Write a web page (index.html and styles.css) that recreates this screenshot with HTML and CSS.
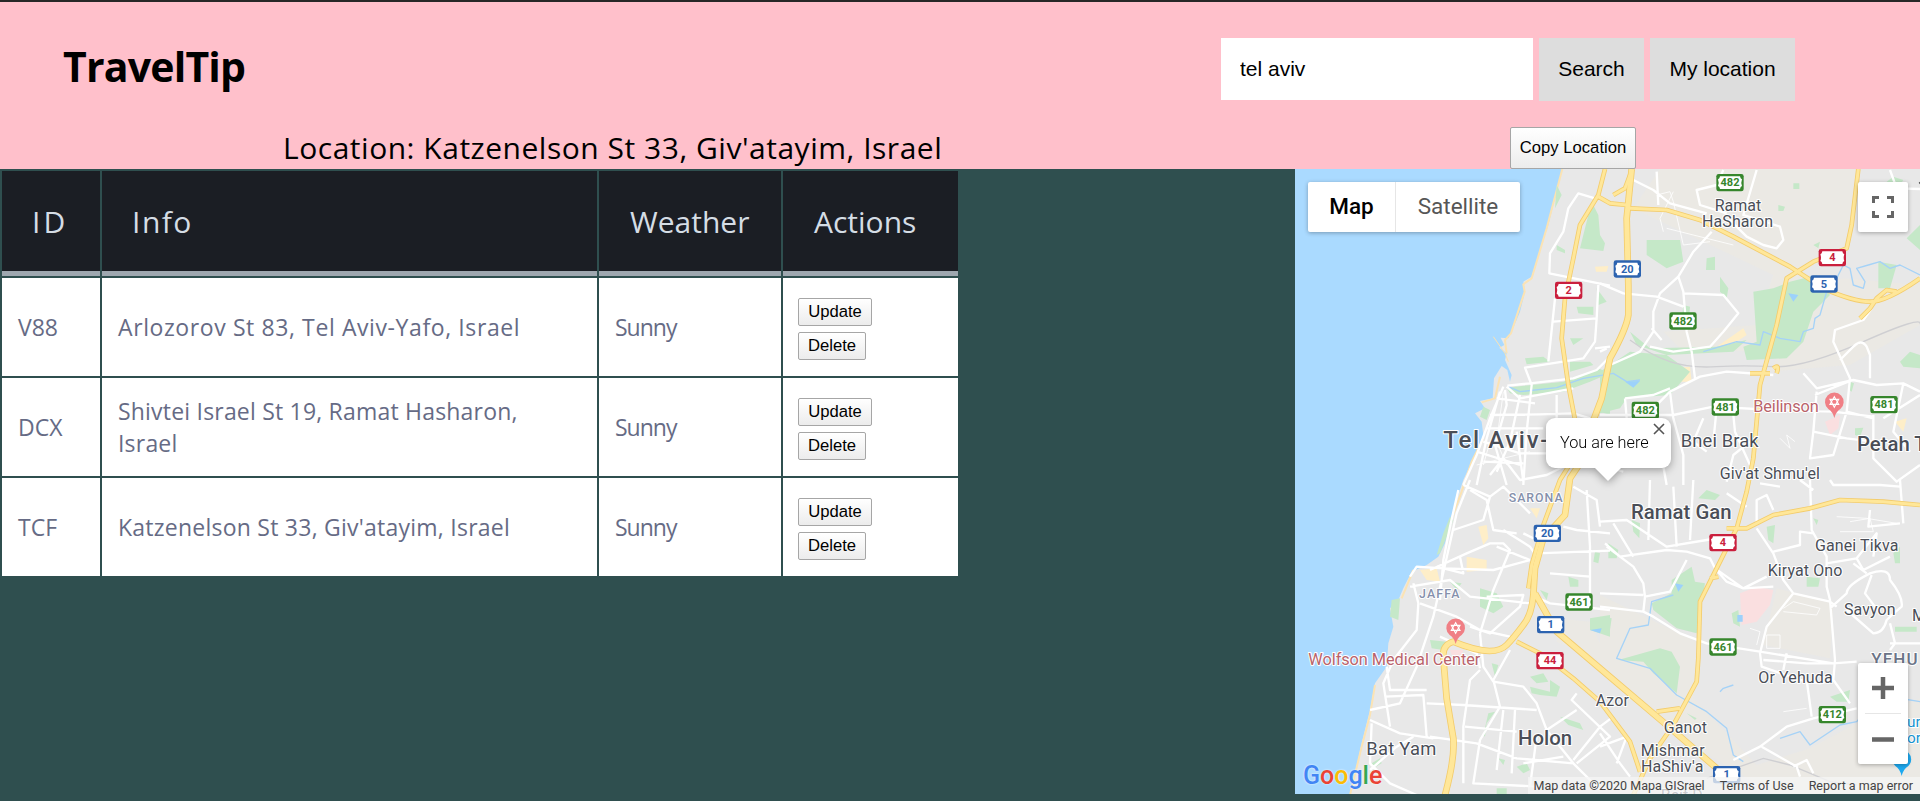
FILE: index.html
```html
<!DOCTYPE html>
<html lang="en">
<head>
<meta charset="utf-8">
<title>TravelTip</title>
<link rel="stylesheet" href="styles.css">
</head>
<body>
<header class="header">
  <div class="topbar">
    <h1 class="logo">TravelTip</h1>
    <div class="search">
      <input class="search-input" type="text" value="tel aviv">
      <button class="search-btn btn-search">Search</button>
      <button class="search-btn btn-mine">My location</button>
    </div>
  </div>
  <div class="location-row">
    <p class="location">Location: Katzenelson St 33, Giv'atayim, Israel</p>
    <button class="native copy-btn">Copy Location</button>
  </div>
</header>
<main class="main">
  <table class="places">
    <colgroup><col class="c-id"><col class="c-info"><col class="c-weather"><col class="c-actions"></colgroup>
    <thead>
      <tr><th><span class="t-id">ID</span></th><th><span class="t-info">Info</span></th><th><span class="t-weather">Weather</span></th><th><span class="t-actions">Actions</span></th></tr>
    </thead>
    <tbody>
      <tr><td class="code">V88</td><td class="info i1">Arlozorov St 83, Tel Aviv-Yafo, Israel</td><td class="sky">Sunny</td><td class="actions"><button class="native">Update</button><button class="native">Delete</button></td></tr>
      <tr><td class="code">DCX</td><td class="info i2">Shivtei Israel St 19, Ramat Hasharon, Israel</td><td class="sky">Sunny</td><td class="actions"><button class="native">Update</button><button class="native">Delete</button></td></tr>
      <tr><td class="code">TCF</td><td class="info i3">Katzenelson St 33, Giv'atayim, Israel</td><td class="sky">Sunny</td><td class="actions"><button class="native">Update</button><button class="native">Delete</button></td></tr>
    </tbody>
  </table>
  <section class="map">
    <svg class="map-canvas" viewBox="15 12 1875 1875">
      <defs>
        <g id="shield">
          <rect x="-41" y="-26" width="82" height="52" rx="7"/>
          <path fill="#fff" d="M-30-19H30Q31-12 36-10Q32 0 36 10Q31 12 30 19H-30Q-31 12-36 10Q-32 0-36-10Q-31-12-30-19Z"/>
        </g>
        <g id="hospital">
          <path fill="#f07f85" d="M0 46Q-5 27-18 19A28 28 0 1 1 18 19Q5 27 0 46Z"/>
          <path fill="none" stroke="#fff" stroke-width="3.5" d="M0-18L13 5H-13ZM0 14L13-10H-13Z"/>
        </g>
      </defs>
      <!-- sea and land -->
      <rect width="1900" height="1900" fill="#aadaff"/>
      <path fill="#e8e8e8" d="M820 0L800 80L775 180L745 270L725 335L700 350L705 380L690 440L665 500L655 520L632 518L643 540L628 548L650 565L645 585L665 630L660 650L652 615L635 603L612 640L608 700L570 708L585 730L555 745L575 770L580 810L565 850L545 890L520 945L500 1005L485 1055L465 1135L445 1175L410 1200L365 1220L340 1270L325 1305L300 1330L310 1385L295 1435L290 1505L255 1555L240 1635L215 1735L178 1900H1900V0Z"/>
      <path class="beach" d="M817 12L770 190L725 340L700 358L704 380L663 505L645 525L650 565M630 635L615 700L575 712M580 820L545 890L515 980L485 1060M370 1215L335 1300M255 1560L240 1650L215 1745L180 1890"/>
      <path fill="#ebe9e4" d="M1110 12H1700L1680 250L1540 310L1400 560L1170 550L1120 500L1400 480L1450 330L1240 230L1030 130ZM1660 340L1890 360V480L1680 600L1440 620L1480 540L1530 380ZM1460 1270L1630 1310L1620 1480L1420 1440ZM930 1290L1220 1430L1210 1600L1400 1800L1560 1750L1690 1680L1890 1600V1887H1450L1240 1760L1150 1680L930 1500ZM800 1360L900 1370L960 1500L800 1430Z"/>
      <path class="beach thin" d="M610 515L645 565L655 590"/>
      <path fill="#feeec8" d="M915 305L955 303L950 320L918 320ZM565 1085L590 1080L595 1120L580 1140ZM530 1175L590 1185V1215L530 1220ZM390 1215L440 1210L450 1250L410 1245ZM1280 545L1360 490L1370 510L1310 550ZM1815 770L1850 760L1840 800ZM720 1030L750 1030L740 1060ZM1140 610L1200 605L1205 650L1150 650Z"/>
      <!-- parks -->
      <g class="park">
        <path d="M905 110L925 150L930 210L945 235L940 258L870 250L885 190ZM800 240L825 255V265L800 255ZM860 425L910 425V450L865 445ZM840 520L880 520L850 540ZM705 580L760 575L780 590L710 598ZM840 590L900 590L910 600L840 620ZM650 668L820 650L930 612L960 625L900 650L820 680L700 690L660 685ZM945 680L960 670V750L930 740ZM800 60L815 90L795 130ZM920 370L950 410L925 420ZM580 725L600 735L590 765L570 755Z"/>
        <path transform="translate(930 0)" d="M140 225L240 225L250 290L200 310L140 270ZM320 280L345 275L345 315L318 315ZM460 380L520 370L570 350L650 330L690 390L640 440L610 530L560 580L440 585L430 545L470 530ZM835 290L890 300L870 370L835 370ZM920 220L960 180V255ZM90 560L200 570L270 620L210 690L80 700L60 730L0 745V620ZM90 500L150 550L350 545L440 525L400 560L200 570L110 540ZM640 240L660 230L655 250ZM900 590L930 560L960 570V610L910 605ZM360 335L385 370L380 400L360 380ZM250 420L270 425L265 480L245 470ZM580 55H598V72H580ZM535 120L555 125L550 138H535ZM860 50L880 35L910 45L900 60ZM765 790L790 788L780 815L765 810ZM750 650L762 655L755 680L748 675Z"/>
        <path transform="translate(0 945)" d="M480 110L490 120L450 220L440 225L460 160ZM305 360L330 355L325 420L300 410ZM570 325L620 340L640 380L610 400L570 380ZM480 305L515 310L500 330ZM420 480L470 485L460 510L425 505ZM720 590L760 580L775 605L740 610ZM780 600L810 620L800 650L750 645L725 640L720 620L780 635ZM810 710L870 730L880 750L835 735ZM680 860L710 850L720 870L700 880ZM625 835L645 840L640 855ZM620 925L650 925V945H620ZM900 415L960 405V470L900 450ZM835 290L865 300V320H840ZM915 215L930 220L925 250L910 245ZM245 850L270 835L275 850L250 865ZM595 700L615 695L590 730L585 770L580 765ZM605 550L625 555L615 590ZM750 330L775 340L770 360Z"/>
        <path transform="translate(930 945)" d="M215 300L275 260L285 305L315 310L290 460L230 445L160 390L155 370L215 340ZM55 540L180 505L215 515L240 560L230 640L160 580L130 545ZM25 190L55 210L50 235L25 235ZM295 55L320 30L360 45L345 60ZM500 140L525 135L520 190L505 180ZM620 290L660 295L655 320H620ZM880 220L900 200L900 250L885 250ZM885 440H950V455H885ZM690 650L750 630L745 665L710 665ZM640 115L655 120L650 135ZM0 410L35 415L30 450H0ZM260 700L290 715L285 720ZM95 120L120 130L118 175L100 155ZM395 400L415 390L420 440L400 430Z"/>
      </g>
      <path fill="#fadfe0" d="M1350 1285L1400 1265L1450 1275L1440 1320L1400 1370L1355 1380ZM1605 770L1650 750L1645 790L1620 810ZM480 1455L520 1455L515 1475L485 1470Z"/>
      <path class="stream" d="M655 665L690 680L800 668L880 640L970 625L1010 650L1050 645M1240 560L1340 530L1410 540L1420 500L1470 520L1530 530L1540 500L1570 490L1575 460L1590 450L1610 380L1640 340L1660 300L1680 310L1690 360L1720 370L1725 350L1700 310L1735 300L1770 290L1800 310L1830 300L1890 330M1150 1290L1085 1310L1075 1380L1020 1390L980 1480L1080 1510L1160 1590L1250 1640L1310 1690L1330 1770L1360 1790M1470 1720L1530 1700L1560 1740L1650 1680L1700 1670L1770 1590L1890 1610M1290 1580L1300 1570L1330 1560"/>
      <path fill="#9cd1fb" d="M1495 385L1525 390L1510 410ZM1005 650L1050 648L1030 668ZM1155 1255L1180 1260L1165 1280ZM900 1395L935 1390L930 1405ZM1342 1350H1358V1370H1342Z"/>
      <path fill="none" stroke="#cfcfd2" stroke-width="4" d="M1020 525Q1080 570 1140 590T1280 605T1450 605T1720 530T1890 478M1250 1840L1420 1780L1500 1800L1620 1850L1700 1860"/>
      <!-- fine streets -->
      <path class="lane" d="M1100 90L1140 80L1150 110L1180 240L1260 230M1130 190L1330 240M1470 820L1500 850L1490 810L1515 830M1640 1055L1730 1060L1820 1075M1650 1100L1750 1100L1740 1060L1680 1070M1480 1330L1510 1310L1590 1330L1580 1350L1480 1340M1380 1390L1410 1400L1400 1440M1430 1450H1470V1410H1430ZM1480 1640L1550 1630M560 900L720 860M600 830L580 900M640 680L620 830L650 900M1120 200L1110 160L1150 80"/>
      <!-- streets -->
      <g class="street">
        <path d="M915 100L865 85L835 130L820 200L780 265L778 325L960 362M790 470L920 460L915 530L880 580L705 608L725 660L710 800L700 960M925 360L920 460M795 400L775 590M960 545L915 550M652 662L720 655L850 640L920 615L955 580M640 665L600 760L560 870L520 960M630 680L590 820L560 960M645 675L650 720L615 840L650 960M690 690L660 830L620 920M650 665L690 700L850 670M620 700L735 715M600 750L750 748L850 745L900 760M590 790L760 790M580 830L690 865L780 865M560 860L690 900M680 800L700 950M800 690L800 760M580 890L700 895M600 930L640 880L690 945L770 930L830 900"/>
        <path transform="translate(930 0)" d="M100 45L160 75L210 115L320 145M170 20L175 120M370 15L350 60L290 75L300 120L380 145M470 15L430 150L480 165L540 185L550 225L530 250L490 240L440 215L390 165M335 200L280 260L235 335L180 385L160 440L160 500L120 560L30 600M0 355L70 385L170 395L250 425M235 335L250 380L260 500L275 560L285 640M250 385L370 390L415 445L370 500L330 545L220 560L150 545M155 490L185 525M0 560L20 550M815 430L790 465L705 495L700 530L750 640L740 740L820 760M720 585L760 545Q785 520 800 545L810 570V640M520 630L380 620L300 635L210 680L150 740M610 625L650 670L760 645L830 660L910 655L960 680M645 690L745 650M650 680L640 800L740 820M210 680L220 760L250 870L250 960M75 700L160 690L210 670M75 700L80 760M0 750L220 750L340 725L520 735L700 740L820 755M350 730L340 830M400 750L405 800L450 900M450 830L400 870L380 950M820 750V880L890 950L960 900M910 655L880 800L930 860M960 690L850 760M640 800L630 880L700 870L740 740M740 820L820 830M310 760L280 830L320 860M870 15L890 70L960 72M180 850L200 960M0 900L70 920"/>
        <path transform="translate(0 945)" d="M540 0L500 100L430 410L380 560L330 670L240 690M505 30L480 140L460 240L450 360M360 290L380 260L460 265L610 270L720 240M540 30L590 60L610 150L680 160M420 270L530 220L600 190L640 190L660 210L610 330L570 460M520 15L600 50L640 20L720 100M640 150L720 200L740 230M620 200L720 240M510 230L520 280L440 260M360 320L480 300L540 350L720 370M390 370L500 410L570 450L660 470M370 310L385 370L380 450L310 540L280 610L300 740M290 560L300 630L410 630M285 650L400 645L410 770M410 670L520 675L740 690M420 770L560 790L680 835L850 850M240 720L330 760L430 775M245 730L240 850L300 910L380 945M240 870L320 800L370 770M520 910V740L540 600L570 570M570 460L580 560L610 605L700 620L740 670L770 750L850 850L930 930M660 510L610 600L630 680L570 780L550 910L750 920M525 740L680 755M640 690L620 870M675 690L665 880M860 640L845 660L960 770L860 850M770 750L860 690M930 740L850 840M740 770L720 920M700 850L820 830M740 220L960 212M780 280L900 290M735 350L780 370L960 390M820 140L860 150L960 160M850 20L920 60L930 140M890 30L900 200L900 350M590 350L700 345L690 380L600 460L540 440M600 50L580 120L490 150M700 160L740 180M450 470L560 520L570 565"/>
        <path transform="translate(930 945)" d="M0 125L80 120L200 200L320 180L380 170M40 130L100 230M150 0L145 180M220 20L230 200M280 0L270 180M15 190L60 230L200 210L260 215L330 235L345 265L380 305L430 325L520 320M20 200L100 260L130 310L135 350L210 335L260 240M135 350L130 395L0 380M0 340L130 345M130 395L160 410L240 460L320 490L480 515L700 550L770 545M345 265L430 325L500 290M470 145L520 220L550 300L580 340L690 365L710 380M470 130V60L500 45L520 90M630 0L635 150L680 230L680 320L690 360L705 540L700 600L750 670M520 215L600 195L600 155L640 160M900 0L910 130M690 0L700 15L840 15L900 20M810 90L805 140L900 130M680 250L770 235L790 270L870 230M770 235L830 160L820 230M690 385L740 340Q740 315 810 280Q870 260 870 300Q910 350 905 380Q880 400 860 420Q850 460 820 460L740 390M815 285L795 340L840 400M870 430L885 490L870 510M580 340L500 440L480 520L485 560L600 600L660 610L700 600M490 540L620 550L700 550M620 600L635 710M770 685L640 715L560 740L480 800L400 840M485 800L590 860L600 890M800 280L760 250M560 520L550 570M640 30L600 0M540 20L480 10M870 490L960 490M380 40L440 80M0 740L40 710M0 800L80 770L50 850M0 760L60 850L90 890M580 860L620 840L640 880"/>
      </g>
      <!-- highways -->
      <g class="hw-edge">
        <path class="wide" d="M1025 12L1010 160L1015 360V450Q1010 490 960 580L935 700L905 780L880 880L840 940L825 1050L760 1120L735 1210L730 1290Q725 1350 700 1380Q670 1420 650 1440Q610 1480 490 1430Q455 1440 460 1480L470 1600L490 1720Q495 1780 465 1890M735 1285L800 1400L930 1510L1130 1680L1280 1810"/>
        <path d="M945 12L925 90L870 180L850 280L825 400L815 520L835 660L860 790L870 850L810 945L760 1080L725 1200L715 1270M925 95L960 115L1010 120M1020 130L1130 135L1230 165L1330 215L1500 305L1600 370Q1690 410 1740 410Q1790 410 1890 340M1705 12L1685 180L1670 250L1570 290L1490 340L1460 480L1410 660L1390 880L1370 980L1340 1090L1290 1190L1230 1310L1225 1480L1220 1550L1150 1680L1080 1780L1030 1890M1310 1090L1370 1090L1450 1050L1560 1030L1650 1005L1780 1010L1890 1020M680 1430L760 1470L850 1540L930 1610L1020 1730L1050 1820M1450 610Q1470 595 1460 625M1440 625L1380 625M970 90L1005 70L1020 30M1100 1640L1170 1630M1710 460L1740 430L1760 400L1790 375L1820 380M1260 1240L1285 1235"/>
      </g>
      <g class="hw-fill">
        <path class="wide" d="M1025 12L1010 160L1015 360V450Q1010 490 960 580L935 700L905 780L880 880L840 940L825 1050L760 1120L735 1210L730 1290Q725 1350 700 1380Q670 1420 650 1440Q610 1480 490 1430Q455 1440 460 1480L470 1600L490 1720Q495 1780 465 1890M735 1285L800 1400L930 1510L1130 1680L1280 1810"/>
        <path d="M945 12L925 90L870 180L850 280L825 400L815 520L835 660L860 790L870 850L810 945L760 1080L725 1200L715 1270M925 95L960 115L1010 120M1020 130L1130 135L1230 165L1330 215L1500 305L1600 370Q1690 410 1740 410Q1790 410 1890 340M1705 12L1685 180L1670 250L1570 290L1490 340L1460 480L1410 660L1390 880L1370 980L1340 1090L1290 1190L1230 1310L1225 1480L1220 1550L1150 1680L1080 1780L1030 1890M1310 1090L1370 1090L1450 1050L1560 1030L1650 1005L1780 1010L1890 1020M680 1430L760 1470L850 1540L930 1610L1020 1730L1050 1820M1450 610Q1470 595 1460 625M1440 625L1380 625M970 90L1005 70L1020 30M1100 1640L1170 1630M1710 460L1740 430L1760 400L1790 375L1820 380M1260 1240L1285 1235"/>
      </g>
      <!-- road shields -->
      <g class="shields">
        <g class="red">
          <use href="#shield" x="836" y="376"/><text x="836" y="387">2</text>
          <use href="#shield" x="1627" y="278"/><text x="1627" y="289">4</text>
          <use href="#shield" x="1299" y="1133"/><text x="1299" y="1144">4</text>
          <use href="#shield" x="780" y="1487"/><text x="780" y="1498">44</text>
        </g>
        <g class="blue">
          <use href="#shield" x="1012" y="312"/><text x="1012" y="323">20</text>
          <use href="#shield" x="1602" y="357"/><text x="1602" y="368">5</text>
          <use href="#shield" x="772" y="1105"/><text x="772" y="1116">20</text>
          <use href="#shield" x="782" y="1379"/><text x="782" y="1390">1</text>
          <use href="#shield" x="1310" y="1829"/><text x="1310" y="1838">1</text>
        </g>
        <g class="green">
          <use href="#shield" x="1320" y="53"/><text x="1320" y="64">482</text>
          <use href="#shield" x="1179" y="468"/><text x="1179" y="479">482</text>
          <use href="#shield" x="1066" y="736"/><text x="1066" y="747">482</text>
          <use href="#shield" x="1306" y="726"/><text x="1306" y="737">481</text>
          <use href="#shield" x="1782" y="719"/><text x="1782" y="730">481</text>
          <use href="#shield" x="867" y="1311"/><text x="867" y="1322">461</text>
          <use href="#shield" x="1299" y="1446"/><text x="1299" y="1457">461</text>
          <use href="#shield" x="1627" y="1649"/><text x="1627" y="1660">412</text>
        </g>
      </g>
      <use href="#hospital" x="1633" y="713"/>
      <use href="#hospital" x="497" y="1391"/>
      <path fill="#1da9f0" d="M1835 1833Q1830 1812 1816 1803A28 28 0 1 1 1855 1803Q1840 1812 1835 1833Z"/>
      <!-- place names -->
      <g class="labels">
        <text class="city" x="460" y="850" textLength="315">Tel Aviv-</text>
        <text class="place mid" x="1274" y="137" textLength="140">Ramat</text>
        <text class="place mid" x="1236" y="186" textLength="213">HaSharon</text>
        <text class="place lg" x="1172" y="846" textLength="234">Bnei Brak</text>
        <text class="place mid" x="1289" y="943" textLength="301">Giv'at Shmu'el</text>
        <text class="town" x="1701" y="859">Petah Tikva</text>
        <text class="town" x="1023" y="1063" textLength="302">Ramat Gan</text>
        <text class="place mid" x="1575" y="1158" textLength="250">Ganei Tikva</text>
        <text class="place mid" x="1433" y="1232" textLength="224">Kiryat Ono</text>
        <text class="place mid" x="1662" y="1349" textLength="155">Savyon</text>
        <text class="place mid" x="1866" y="1368">Mazor</text>
        <text class="place mid" x="1405" y="1554" textLength="223">Or Yehuda</text>
        <text class="place mid" x="917" y="1623" textLength="100">Azor</text>
        <text class="place mid" x="1121" y="1705" textLength="130">Ganot</text>
        <text class="place mid" x="1052" y="1773" textLength="192">Mishmar</text>
        <text class="place mid" x="1053" y="1822" textLength="187">HaShiv'a</text>
        <text class="place mid" x="1112" y="1908">Beit D</text>
        <text class="place lg" x="229" y="1771" textLength="210">Bat Yam</text>
        <text class="town" x="684" y="1740" textLength="162">Holon</text>
        <text class="area" x="656" y="1010" textLength="162">SARONA</text>
        <text class="area" x="387" y="1299" textLength="121">JAFFA</text>
        <text class="area big" x="1744" y="1500">YEHU</text>
        <text class="poi" x="1390" y="740" textLength="196">Beilinson</text>
        <text class="poi" x="55" y="1501" textLength="516">Wolfson Medical Center</text>
        <text class="airport" x="1851" y="1685">ur</text>
        <text class="airport" x="1851" y="1733">or</text>
        <path fill="#444" d="M1886 53L1890 50V58Z"/>
      </g>
    </svg>
    <div class="map-type"><button class="type-btn on">Map</button><button class="type-btn">Satellite</button></div>
    <div class="fullscreen"><svg width="22" height="22" viewBox="0 0 22 22"><path fill="none" stroke="#666" stroke-width="3" d="M1.5 7V1.5H7M15 1.5h5.5V7M20.500 15v5.5H15M7 20.500H1.500V15"/></svg></div>
    <div class="zoom"><svg width="50" height="101" viewBox="0 0 50 101"><path fill="none" stroke="#666" stroke-width="4.500" d="M14 25H36M25 14V36M14 76.500H36"/><path stroke="#e6e6e6" d="M7 50.500H43"/></svg></div>
    <div class="bubble"><span>You are here</span><svg class="close" width="12" height="12" viewBox="0 0 12 12"><path fill="none" stroke="#555" stroke-width="1.600" d="M1 1L11 11M11 1L1 11"/></svg></div>
    <div class="google"><b class="g1">G</b><b class="g2">o</b><b class="g3">o</b><b class="g1">g</b><b class="g4">l</b><b class="g2">e</b></div>
    <div class="credits"><span class="cr-data">Map data ©2020 Mapa GISrael</span><span class="cr-terms">Terms of Use</span><span class="cr-report">Report a map error</span></div>
  </section>
</main>
</body>
</html>
```
FILE: styles.css
```css
* { box-sizing: border-box; }
body { margin: 0; height: 801px; overflow: hidden; background: #2f4f4f; font-family: "Comic Sans MS", "Open Sans", sans-serif; }
button, input { font-family: Arial, "Liberation Sans", sans-serif; border: 0; margin: 0; color: #000; }

.header { height: 169px; background: #ffc0cb; border-top: 2px solid #272727; }
.topbar { display: flex; justify-content: space-between; align-items: flex-start; height: 125px; padding: 36px 125px 0 63px; }
.logo { margin: 0; font-size: 41px; line-height: 56px; letter-spacing: -0.8px; white-space: nowrap; }
.search { display: flex; align-items: flex-start; gap: 6px; }
.search-input { width: 312px; height: 62px; padding: 0 19px; font-size: 21px; background: #fff; }
.search-btn { height: 63px; padding: 0 0 2px; font-size: 21px; background: #ddd; }
.btn-search { width: 105px; }
.btn-mine { width: 145px; }
.location-row { display: flex; justify-content: space-between; padding: 0 284px 0 283px; }
.location { margin: 0; height: 41px; font-size: 30px; line-height: 41px; letter-spacing: 0.52px; white-space: nowrap; }
.native { display: block; height: 28px; padding: 0; font-size: 16.67px; border: 1px solid #a6a6a6; border-radius: 2px; background: linear-gradient(#fff, #ececec); }
.copy-btn { width: 126px; height: 42px; }

.main { display: flex; justify-content: space-between; align-items: flex-start; }
.places { width: 960px; table-layout: fixed; border-collapse: separate; border-spacing: 2px; }
.c-id { width: 98px; }
.c-info { width: 495px; }
.c-weather { width: 182px; }
.places th { height: 105px; padding: 2px 0 0 31px; font-size: 30px; font-weight: 400; line-height: 40px; text-align: left; color: #d5dde5; background: #1b1e24; border-bottom: 5px solid #9ea7af; }
.t-id { margin-left: -1px; letter-spacing: 3px; }
.t-info { margin-left: -1px; letter-spacing: 1.5px; }
.places td { height: 98px; padding: 0 60px 0 16px; font-size: 23px; line-height: 32px; color: #666b85; background: #fff; white-space: nowrap; }
.places td.info { white-space: normal; }
.i1 { letter-spacing: 0.6px; }
.i2 { letter-spacing: 0.2px; }
.i3 { letter-spacing: 0.24px; }
.sky { letter-spacing: -1px; }
.places td.actions { padding: 4px 15px 0; }
.actions .native { width: 74px; }
.actions .native + .native { width: 68px; margin-top: 6px; }

.map { position: relative; width: 625px; height: 625px; overflow: hidden; font-family: Roboto, sans-serif; }
.map-canvas { display: block; width: 625px; height: 625px; }
.beach { fill: none; stroke: #fbe3b4; stroke-width: 6; }
.beach.thin { stroke-width: 3; }
.park { fill: #c5e8c8; }
.stream { fill: none; stroke: #a5d2f7; stroke-width: 4; stroke-linejoin: round; }
.lane { fill: none; stroke: #fff; stroke-width: 3; opacity: .8; }
.street { fill: none; stroke: #fff; stroke-width: 7; stroke-linejoin: round; }
.hw-edge, .hw-fill { fill: none; stroke-linejoin: round; }
.hw-edge { stroke: #f3cc6c; stroke-width: 14; }
.hw-fill { stroke: #ffe799; stroke-width: 9; }
.hw-edge .wide { stroke-width: 20; }
.hw-fill .wide { stroke-width: 15; }
.shields { font: bold 33px Roboto, sans-serif; text-anchor: middle; }
.red { fill: #ca1f3d; }
.blue { fill: #2c63b0; }
.green { fill: #36862c; }
.labels text { paint-order: stroke; stroke: #fff; stroke-width: 6px; stroke-linejoin: round; fill: #4a4e57; }
.mid { font-size: 48px; }
.lg { font-size: 55px; }
.town { font-size: 61px; font-weight: 500; }
.city { font-size: 72px; font-weight: 500; }
.labels .area { font-size: 37px; font-weight: 500; fill: #8590ab; }
.labels .area.big { font-size: 51px; letter-spacing: 3px; fill: #6b7487; }
.labels .poi { font-size: 49px; fill: #b9636b; }
.labels .airport { font-size: 46px; fill: #1994d2; }

.map-type { position: absolute; left: 13px; top: 13px; display: flex; width: 212px; height: 50px; background: #fff; border-radius: 2px; box-shadow: 0 1px 4px rgba(0, 0, 0, .3); }
.type-btn { flex: 1; padding: 0 0 2px; font: 22.5px Roboto, sans-serif; color: #565656; background: none; }
.type-btn.on { flex: 0 0 88px; font-weight: 500; color: #000; border-right: 1px solid #e6e6e6; }
.fullscreen, .zoom { position: absolute; left: 563px; width: 50px; background: #fff; border-radius: 2px; box-shadow: 0 1px 4px rgba(0, 0, 0, .3); }
.fullscreen { top: 13px; height: 50px; padding: 14px; }
.fullscreen svg, .zoom svg { display: block; }
.zoom { top: 494px; height: 101px; }
.bubble { position: absolute; left: 251px; top: 249px; width: 125px; height: 50px; padding-left: 14px; border-radius: 9px; background: #fff; font-size: 16.25px; font-weight: 300; line-height: 49px; white-space: nowrap; color: #000; filter: drop-shadow(0 2px 4px rgba(0, 0, 0, .35)); }
.bubble::after { content: ""; position: absolute; left: 48px; top: 49px; border: 14px solid transparent; border-top-color: #fff; border-bottom: 0; }
.close { position: absolute; right: 6px; top: 5px; }
.google { position: absolute; left: 8px; top: 589px; font: 25px/36px Roboto, sans-serif; text-shadow: 0 0 2px #fff; }
.google b { font-weight: 500; }
.g1 { color: #4285f4; } .g2 { color: #ea4335; } .g3 { color: #fbbc05; } .g4 { color: #34a853; }
.credits { position: absolute; right: 0; bottom: 0; display: flex; height: 17px; padding: 0 7px 0 6px; gap: 15px; font-size: 12.5px; line-height: 17px; white-space: nowrap; color: #444; background: rgba(245, 245, 245, .75); }
```
